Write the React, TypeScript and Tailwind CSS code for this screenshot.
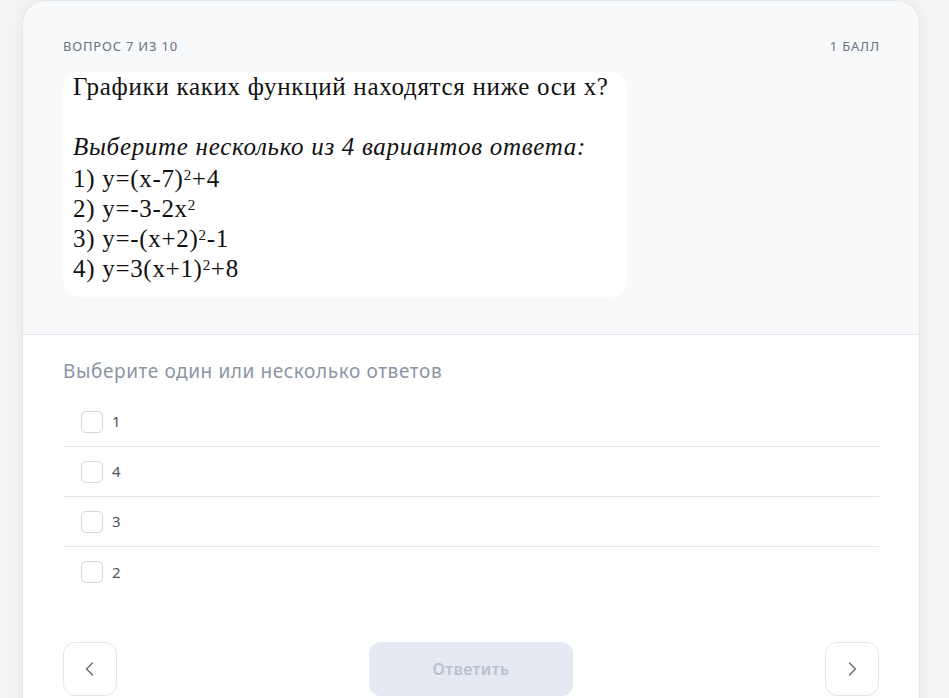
import React from "react";

const sans = { fontFamily: '"Noto Sans", "Open Sans", Arial, sans-serif' };
const serif = { fontFamily: '"Liberation Serif", "Times New Roman", serif' };

const options = ["1", "4", "3", "2"];

function Chevron({ dir }: { dir: "left" | "right" }) {
  return (
    <svg width="20" height="20" viewBox="0 0 20 20" fill="none">
      <path
        d={dir === "left" ? "M12.5 4 L6.5 10 L12.5 16" : "M7.5 4 L13.5 10 L7.5 16"}
        stroke="#6b7280"
        strokeWidth="1.5"
        strokeLinecap="round"
        strokeLinejoin="round"
      />
    </svg>
  );
}

export default function App() {
  return (
    <div className="min-h-[698px] w-full bg-[#f4f4f5] overflow-hidden" style={sans}>
      <div className="ml-[22px] w-[898px] rounded-t-[24px] border border-[#e3e6eb] bg-white shadow-[0_0_12px_rgba(0,0,0,0.06)] overflow-hidden">
        {/* question header */}
        <div className="bg-[#f8f9fb] border-b border-[#e2e5ea] px-[40px] pt-[36px] pb-[37px]">
          <div className="flex justify-between text-[13px] leading-[18px] text-[#6b7280] uppercase tracking-[0.8px]">
            <span>Вопрос 7 из 10</span>
            <span className="-mr-[0.8px]">1 балл</span>
          </div>
          <div
            className="mt-[19px] w-[564px] rounded-[16px] bg-white pl-[10px] pb-[13px] text-[25px] leading-[30px] tracking-[0.7px] text-[#111]"
            style={serif}
          >
            <div className="-mt-[2px]">Графики каких функций находятся ниже оси x?</div>
            <div>&nbsp;</div>
            <div className="italic mb-[2px]">Выберите несколько из 4 вариантов ответа:</div>
            <div>1) y=(x-7)<sup className="text-[15px] leading-none">2</sup>+4</div>
            <div>2) y=-3-2x<sup className="text-[15px] leading-none">2</sup></div>
            <div>3) y=-(x+2)<sup className="text-[15px] leading-none">2</sup>-1</div>
            <div>4) y=3(x+1)<sup className="text-[15px] leading-none">2</sup>+8</div>
          </div>
        </div>

        {/* answers */}
        <div className="px-[40px] pt-[24px]">
          <div className="text-[19px] leading-[24px] tracking-[0.6px] text-[#8b95a5]">Выберите один или несколько ответов</div>
          <div className="mt-[14px]">
            {options.map((o, i) => (
              <div
                key={o}
                className={`flex h-[50px] items-center pl-[18px] ${i < options.length - 1 ? "border-b border-[#e3e5e9]" : ""}`}
              >
                <span className="h-[22px] w-[22px] rounded-[5px] border border-[#d3d7dd] bg-white" />
                <span className="ml-[9px] text-[15px] text-[#4b5563]">{o}</span>
              </div>
            ))}
          </div>

          <div className="mt-[45px] flex items-center justify-between pb-[20px]">
            <button className="flex h-[54px] w-[54px] items-center justify-center rounded-[12px] border border-[#e3e6eb] bg-white">
              <Chevron dir="left" />
            </button>
            <button className="h-[54px] w-[204px] rounded-[12px] bg-[#e4e9f2] text-[16px] tracking-[0.4px] font-semibold text-[#b8c1cf]">
              Ответить
            </button>
            <button className="flex h-[54px] w-[54px] items-center justify-center rounded-[12px] border border-[#e3e6eb] bg-white">
              <Chevron dir="right" />
            </button>
          </div>
        </div>
      </div>
    </div>
  );
}
